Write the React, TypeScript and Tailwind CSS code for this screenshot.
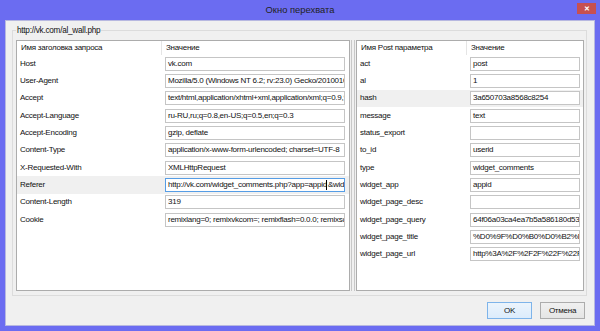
import React from 'react';

type Row = { name: string; value: string; active?: boolean; caret?: boolean };

const headers: Row[] = [
  { name: 'Host', value: 'vk.com' },
  { name: 'User-Agent', value: 'Mozilla/5.0 (Windows NT 6.2; rv:23.0) Gecko/20100101 Firefox/23.0' },
  { name: 'Accept', value: 'text/html,application/xhtml+xml,application/xml;q=0.9,*/*;q=0.8' },
  { name: 'Accept-Language', value: 'ru-RU,ru;q=0.8,en-US;q=0.5,en;q=0.3' },
  { name: 'Accept-Encoding', value: 'gzip, deflate' },
  { name: 'Content-Type', value: 'application/x-www-form-urlencoded; charset=UTF-8' },
  { name: 'X-Requested-With', value: 'XMLHttpRequest' },
  { name: 'Referer', value: 'http://vk.com/widget_comments.php?app=appid&widget=4', active: true, caret: true },
  { name: 'Content-Length', value: '319' },
  { name: 'Cookie', value: 'remixlang=0; remixvkcom=; remixflash=0.0.0; remixscreen_depth=24' },
];

const params: Row[] = [
  { name: 'act', value: 'post' },
  { name: 'al', value: '1' },
  { name: 'hash', value: '3a650703a8568c8254', active: true },
  { name: 'message', value: 'text' },
  { name: 'status_export', value: '' },
  { name: 'to_id', value: 'userid' },
  { name: 'type', value: 'widget_comments' },
  { name: 'widget_app', value: 'appid' },
  { name: 'widget_page_desc', value: '' },
  { name: 'widget_page_query', value: '64f06a03ca4ea7b5a586180d53bf3a1e' },
  { name: 'widget_page_title', value: '%D0%9F%D0%B0%D0%B2%D0%B5%D0%BB' },
  { name: 'widget_page_url', value: 'http%3A%2F%2F2F%22F%22F%22F%22F' },
];

function ValueBox({ row, width }: { row: Row; width: string }) {
  const focused = row.caret;
  return (
    <div
      className={`${width} h-[14px] bg-white border ${focused ? 'border-[#569de5]' : 'border-[#c5c5c5]'} overflow-hidden whitespace-nowrap pl-[2px] leading-[12px]`}
    >
      {row.caret ? (
        <>
          http://vk.com/widget_comments.php?app=appid
          <span className="inline-block w-px h-[10px] bg-black align-middle -ml-[1px] mr-[1px]" />
          &amp;widget=4
        </>
      ) : (
        row.value
      )}
    </div>
  );
}

function Table({
  title,
  rows,
  width,
  colW,
  inputW,
}: {
  title: string;
  rows: Row[];
  width: string;
  colW: string;
  inputW: string;
}) {
  return (
    <div className={`${width} h-[251px] border border-[#acacac] bg-white flex flex-col`}>
      <div className="h-[14px] flex items-center whitespace-nowrap">
        <div className={`${colW} h-full pl-[4px] border-r border-[#e5e5e5] leading-[14px]`}>{title}</div>
        <div className="pl-[4px] leading-[14px]">Значение</div>
      </div>
      {rows.map((r) => (
        <div key={r.name} className={`h-[17.33px] flex items-center whitespace-nowrap ${r.active ? 'bg-[#f0f0f0]' : ''}`}>
          <div className={`${colW} pl-[3px]`}>{r.name}</div>
          <div className="pl-[3px]">
            <ValueBox row={r} width={inputW} />
          </div>
        </div>
      ))}
    </div>
  );
}

export default function App() {
  return (
    <div
      className="w-[600px] h-[331px] bg-[#6b6cf1] flex flex-col text-[8px] tracking-[-0.25px] text-[#111]"
      style={{ fontFamily: '"Liberation Sans", Arial, sans-serif' }}
    >
      <div className="h-[20px] relative flex items-center justify-center text-[9.4px] tracking-normal text-[#222]">
        Окно перехвата
        <div className="absolute right-[4px] top-[3px] w-[19px] h-[11px] bg-[#c75050] flex items-center justify-center text-white text-[7px] font-bold leading-none">
          ✕
        </div>
      </div>
      <div className="mx-[5px] mb-[5px] flex-1 bg-[#f0f0f0] border border-[#b7b8e0] flex flex-col">
        <fieldset className="mt-[2px] ml-[6px] w-[575px] border border-[#dcdcdc] pl-[3px] pr-[2px] pt-[2px] pb-[4px]">
          <legend className="px-[1px] leading-[15px] text-[8.2px]">http://vk.com/al_wall.php</legend>
          <div className="flex">
            <Table
              title="Имя заголовка запроса"
              rows={headers}
              width="w-[334px]"
              colW="w-[145px]"
              inputW="w-[180px]"
            />
            <div className="w-[6px] h-[251px] flex justify-center gap-[2px]">
              <div className="w-px bg-[#c8c8c8]" />
              <div className="w-px bg-[#c8c8c8]" />
            </div>
            <Table
              title="Имя Post параметра"
              rows={params}
              width="w-[228px]"
              colW="w-[110px]"
              inputW="w-[110px]"
            />
          </div>
        </fieldset>
        <div className="flex justify-end gap-[8px] mt-[6px] mr-[9px]">
          <button className="w-[45px] h-[17px] border border-[#7eb4ea] bg-gradient-to-b from-[#ecf4fc] to-[#dcecfc] text-[8px] leading-none">
            OK
          </button>
          <button className="w-[45px] h-[17px] border border-[#acacac] bg-gradient-to-b from-[#f0f0f0] to-[#e5e5e5] text-[8px] leading-none">
            Отмена
          </button>
        </div>
      </div>
    </div>
  );
}
